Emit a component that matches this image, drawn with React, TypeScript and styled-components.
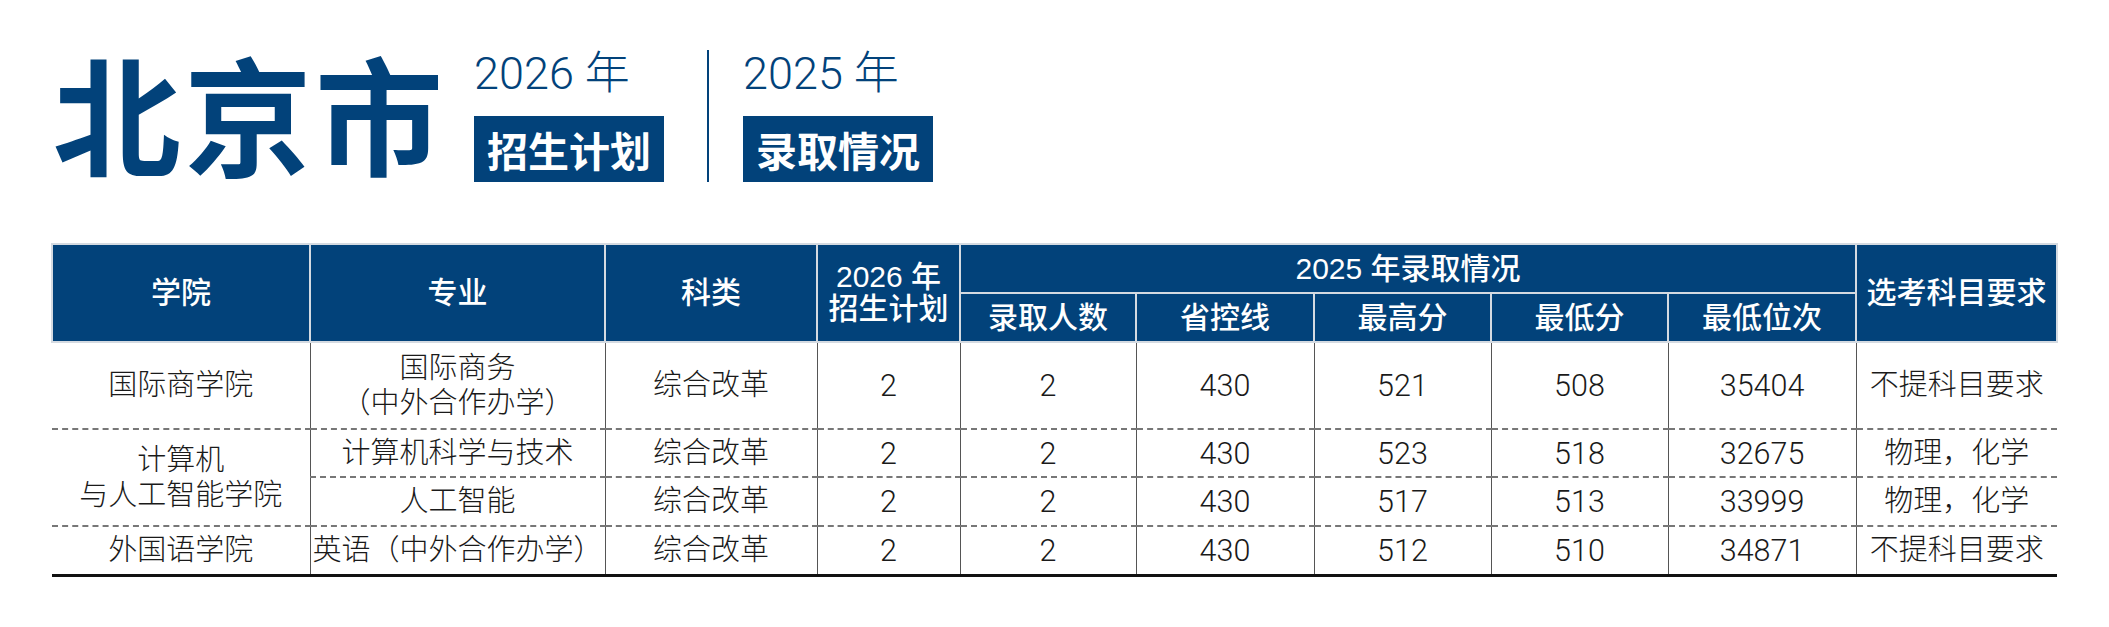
import styled, { createGlobalStyle } from 'styled-components';

const GlobalStyle = createGlobalStyle`
  html, body {
    margin: 0;
    padding: 0;
    background: #fff;
  }
  body {
    font-family: "Noto Sans CJK SC", sans-serif;
  }
`;

const BLUE = '#02427a';

const Page = styled.div`
  width: 2109px;
  height: 627px;
  padding: 48px 0 0 51px;
  box-sizing: border-box;
  overflow: hidden;
`;

const Heading = styled.header`
  display: flex;
  align-items: flex-start;
`;

const City = styled.h1`
  margin: 0 0 0 2px;
  font-family: "Noto Sans CJK SC", sans-serif;
  font-size: 128px;
  font-weight: 700;
  line-height: 1;
  letter-spacing: 3px;
  color: ${BLUE};
`;

const YearGroup = styled.div<{ $left: number }>`
  display: flex;
  flex-direction: column;
  align-items: flex-start;
  row-gap: 20px;
  margin: 3px 0 0 ${(p) => p.$left}px;
`;

const Year = styled.div`
  font-family: Roboto, "Noto Sans CJK SC", sans-serif;
  font-size: 45px;
  font-weight: 300;
  line-height: 45px;
  color: ${BLUE};
  white-space: nowrap;
`;

const Tag = styled.div`
  display: flex;
  align-items: center;
  height: 66px;
  padding: 0 13px;
  background: ${BLUE};
  color: #fff;
  font-family: "Noto Sans CJK SC", sans-serif;
  font-size: 41px;
  font-weight: 700;
  line-height: 1;
  white-space: nowrap;
`;

const Divider = styled.div`
  width: 2px;
  height: 132px;
  margin: 2px 0 0 43px;
  background: ${BLUE};
`;

const Table = styled.table`
  margin-top: 61px;
  width: 2006px;
  table-layout: fixed;
  border-collapse: collapse;
  border-bottom: 3px solid #111;
`;

const Th = styled.th<{ $h?: number }>`
  height: ${(p) => p.$h ?? 47}px;
  padding: 0;
  background: ${BLUE};
  border: 2px solid #d4dae1;
  color: #fff;
  font-family: "Liberation Sans", "Noto Sans CJK SC", sans-serif;
  font-size: 30px;
  font-weight: 500;
  line-height: 32px;
  text-align: center;
  vertical-align: middle;
  white-space: nowrap;
`;

const Tr = styled.tr<{ $h: number }>`
  height: ${(p) => p.$h}px;
`;

const Td = styled.td<{ $num?: boolean; $first?: boolean; $dash?: boolean }>`
  padding: 0;
  border-left: ${(p) => (p.$first ? 'none' : '1px solid #555')};
  border-right: 1px solid #555;
  border-top: ${(p) => (p.$dash ? '2px dashed #777' : 'none')};
  color: #1a1a1a;
  font-family: Roboto, "Noto Sans CJK SC", sans-serif;
  font-size: ${(p) => (p.$num ? 30.5 : 29)}px;
  font-weight: 300;
  line-height: 35px;
  text-align: center;
  vertical-align: middle;
  white-space: nowrap;

  &:last-child {
    border-right: none;
  }
`;

const widths = [258, 295, 212, 143, 176, 178, 177, 177, 188, 201];

type Row = {
  height: number;
  college?: string[];
  collegeSpan?: number;
  major: string[];
  plan: string;
  admitted: string;
  line: string;
  high: string;
  low: string;
  rank: string;
  subjects: string;
};

const rows: Row[] = [
  {
    height: 87,
    college: ['国际商学院'],
    major: ['国际商务', '（中外合作办学）'],
    plan: '2',
    admitted: '2',
    line: '430',
    high: '521',
    low: '508',
    rank: '35404',
    subjects: '不提科目要求',
  },
  {
    height: 48,
    college: ['计算机', '与人工智能学院'],
    collegeSpan: 2,
    major: ['计算机科学与技术'],
    plan: '2',
    admitted: '2',
    line: '430',
    high: '523',
    low: '518',
    rank: '32675',
    subjects: '物理，化学',
  },
  {
    height: 49,
    major: ['人工智能'],
    plan: '2',
    admitted: '2',
    line: '430',
    high: '517',
    low: '513',
    rank: '33999',
    subjects: '物理，化学',
  },
  {
    height: 49,
    college: ['外国语学院'],
    major: ['英语（中外合作办学）'],
    plan: '2',
    admitted: '2',
    line: '430',
    high: '512',
    low: '510',
    rank: '34871',
    subjects: '不提科目要求',
  },
];

function Lines({ items }: { items: string[] }) {
  return (
    <>
      {items.map((t, i) => (
        <div key={i}>{t}</div>
      ))}
    </>
  );
}

export default function App() {
  return (
    <Page>
      <GlobalStyle />
      <Heading>
        <City>北京市</City>
        <YearGroup $left={28}>
          <Year>2026 年</Year>
          <Tag>招生计划</Tag>
        </YearGroup>
        <Divider />
        <YearGroup $left={34}>
          <Year>2025 年</Year>
          <Tag>录取情况</Tag>
        </YearGroup>
      </Heading>

      <Table>
        <colgroup>
          {widths.map((w, i) => (
            <col key={i} style={{ width: w }} />
          ))}
        </colgroup>
        <thead>
          <tr>
            <Th rowSpan={2}>学院</Th>
            <Th rowSpan={2}>专业</Th>
            <Th rowSpan={2}>科类</Th>
            <Th rowSpan={2}>
              2026 年
              <br />
              招生计划
            </Th>
            <Th colSpan={5}>2025 年录取情况</Th>
            <Th rowSpan={2}>选考科目要求</Th>
          </tr>
          <tr>
            <Th>录取人数</Th>
            <Th>省控线</Th>
            <Th>最高分</Th>
            <Th>最低分</Th>
            <Th>最低位次</Th>
          </tr>
        </thead>
        <tbody>
          {rows.map((r, i) => {
            const dash = i > 0;
            return (
              <Tr key={i} $h={r.height}>
                {r.college && (
                  <Td $first $dash={dash} rowSpan={r.collegeSpan ?? 1}>
                    <Lines items={r.college} />
                  </Td>
                )}
                <Td $dash={dash}>
                  <Lines items={r.major} />
                </Td>
                <Td $dash={dash}>综合改革</Td>
                <Td $num $dash={dash}>{r.plan}</Td>
                <Td $num $dash={dash}>{r.admitted}</Td>
                <Td $num $dash={dash}>{r.line}</Td>
                <Td $num $dash={dash}>{r.high}</Td>
                <Td $num $dash={dash}>{r.low}</Td>
                <Td $num $dash={dash}>{r.rank}</Td>
                <Td $dash={dash}>{r.subjects}</Td>
              </Tr>
            );
          })}
        </tbody>
      </Table>
    </Page>
  );
}
